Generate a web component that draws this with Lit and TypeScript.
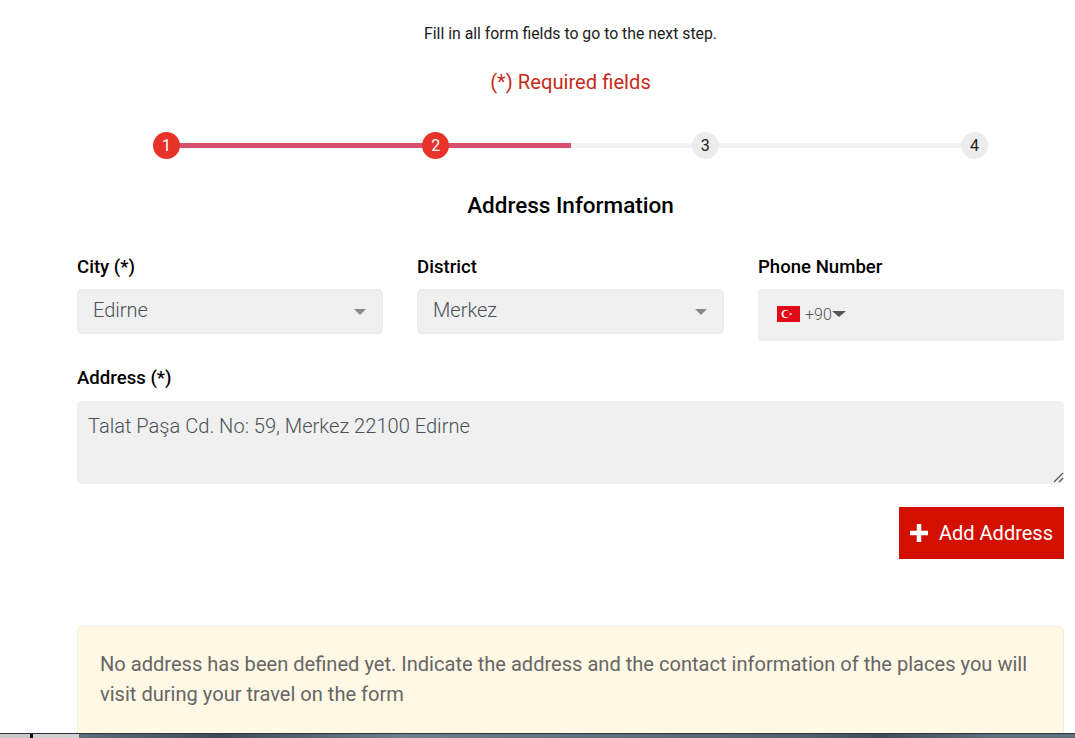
import { LitElement, html, css } from "lit";
import { customElement } from "lit/decorators.js";

@customElement("app-root")
export class AppRoot extends LitElement {
  static styles = css`
    :host { display: block; height: 738px; overflow: hidden; position: relative; background: #fff; font-family: Roboto, sans-serif; color: #000; }
    .page { padding: 25px 11px 0 77px; display: flex; flex-direction: column; }
    .intro { text-align: center; font-size: 15.8px; line-height: 18px; color: #212121; }
    .req { text-align: center; font-size: 20.2px; line-height: 24px; color: #c62b20; margin-top: 27px; }
    .stepper { position: relative; display: flex; justify-content: space-between; margin: 38px 76px 0; height: 27px; align-items: center; }
    .track { position: absolute; left: 13px; right: 13px; top: 11px; height: 5px; background: #f2f2f2; }
    .fill { position: absolute; left: 13px; width: 405px; top: 11px; height: 5px; background: #d9506f; }
    .dot { position: relative; width: 27px; height: 27px; border-radius: 50%; background: #ececec; color: #212121; font-size: 16px; display: flex; align-items: center; justify-content: center; }
    .dot.on { background: #e8332a; color: #fff; }
    h2 { margin: 32px 0 0; text-align: center; font-size: 22.5px; line-height: 28px; font-weight: 500; color: #000; }
    .cols { display: grid; grid-template-columns: 306px 307px 306px; gap: 34px; margin-top: 37px; }
    label { display: block; font-size: 18.6px; line-height: 22px; font-weight: 500; color: #000; }
    .field { margin-top: 11px; height: 45px; box-sizing: border-box; background: #f0f0f0; border: 1px solid #ebebeb; border-radius: 5px; display: flex; align-items: center; justify-content: space-between; padding: 0 16px 3px 15px; font-size: 20px; font-weight: 300; color: #495057; }
    .caret { width: 0; height: 0; border-left: 6px solid transparent; border-right: 6px solid transparent; border-top: 6px solid #888; }
    .field .caret { margin-top: 3px; }
    .phone { margin-top: 11px; height: 52px; background: #f0f0f0; border-radius: 3px; display: flex; align-items: center; padding: 0 0 2px 19px; font-size: 16px; font-weight: 300; color: #555; box-sizing: border-box; }
    .phone svg { margin-right: 5px; }
    .phone .caret { border-left-width: 7px; border-right-width: 7px; border-top-color: #555; }
    .addr { margin-top: 26px; }
    .area { position: relative; margin-top: 12px; height: 83px; box-sizing: border-box; background: #f0f0f0; border-radius: 5px; padding: 12px 11px; font-size: 20.1px; line-height: 26px; font-weight: 300; color: #495057; }
    .grip { position: absolute; right: 0; bottom: 1px; }
    .actions { display: flex; justify-content: flex-end; margin-top: 23px; }
    .btn { width: 165px; height: 52px; background: #d30f00; color: #fff; border: 0; padding: 0 0 1px 11px; display: flex; align-items: center; gap: 11px; font-family: inherit; font-size: 20px; font-weight: 400; }
    .alert { margin-top: 67px; height: 120px; box-sizing: border-box; background: #fff8e5; border: 1px solid #f8efd2; border-radius: 5px; padding: 22px 22px; font-size: 20.08px; line-height: 30px; color: #666; }
    .taskbar { position: absolute; left: 0; right: 0; bottom: 0; height: 5px; box-sizing: border-box; border-top: 1px solid #2c3640; background: linear-gradient(90deg, #c8c8c8 0 30px, #111 30px 33px, #d0d0d0 33px 79px, #5b6e7c 79px, #3d4b57 220px, #6a7f90 400px, #50616f 800px, #3e4c58 880px, #5e7282 1000px); }
  `;

  render() {
    return html`
      <div class="page">
        <div class="intro">Fill in all form fields to go to the next step.</div>
        <div class="req">(*) Required fields</div>
        <div class="stepper">
          <div class="track"></div>
          <div class="fill"></div>
          <div class="dot on">1</div>
          <div class="dot on">2</div>
          <div class="dot">3</div>
          <div class="dot">4</div>
        </div>
        <h2>Address Information</h2>
        <div class="cols">
          <div>
            <label>City (*)</label>
            <div class="field"><span>Edirne</span><span class="caret"></span></div>
          </div>
          <div>
            <label>District</label>
            <div class="field"><span>Merkez</span><span class="caret"></span></div>
          </div>
          <div>
            <label>Phone Number</label>
            <div class="phone">
              <svg width="23" height="16" viewBox="0 0 23 16">
                <rect width="23" height="16" fill="#e30a17"/>
                <circle cx="8.5" cy="8" r="4" fill="#fff"/>
                <circle cx="9.6" cy="8" r="3.2" fill="#e30a17"/>
                <path d="M12 8l3-1-1.8 2.5V6.500L15 9z" fill="#fff"/>
              </svg>
              <span>+90</span><span class="caret"></span>
            </div>
          </div>
        </div>
        <div class="addr">
          <label>Address (*)</label>
          <div class="area">
            Talat Paşa Cd. No: 59, Merkez 22100 Edirne
            <svg class="grip" width="12" height="12" viewBox="0 0 12 12"><path d="M2 11L11 2M7 11l4-4" stroke="#555" stroke-width="1.2" fill="none"/></svg>
          </div>
        </div>
        <div class="actions">
          <button class="btn">
            <svg width="18" height="18" viewBox="0 0 18 18"><path d="M9 0v18M0 9h18" stroke="#fff" stroke-width="4.500" fill="none" stroke-linejoin="round"/></svg>
            <span>Add Address</span>
          </button>
        </div>
        <div class="alert">No address has been defined yet. Indicate the address and the contact information of the places you will visit during your travel on the form</div>
      </div>
      <div class="taskbar"></div>
    `;
  }
}
